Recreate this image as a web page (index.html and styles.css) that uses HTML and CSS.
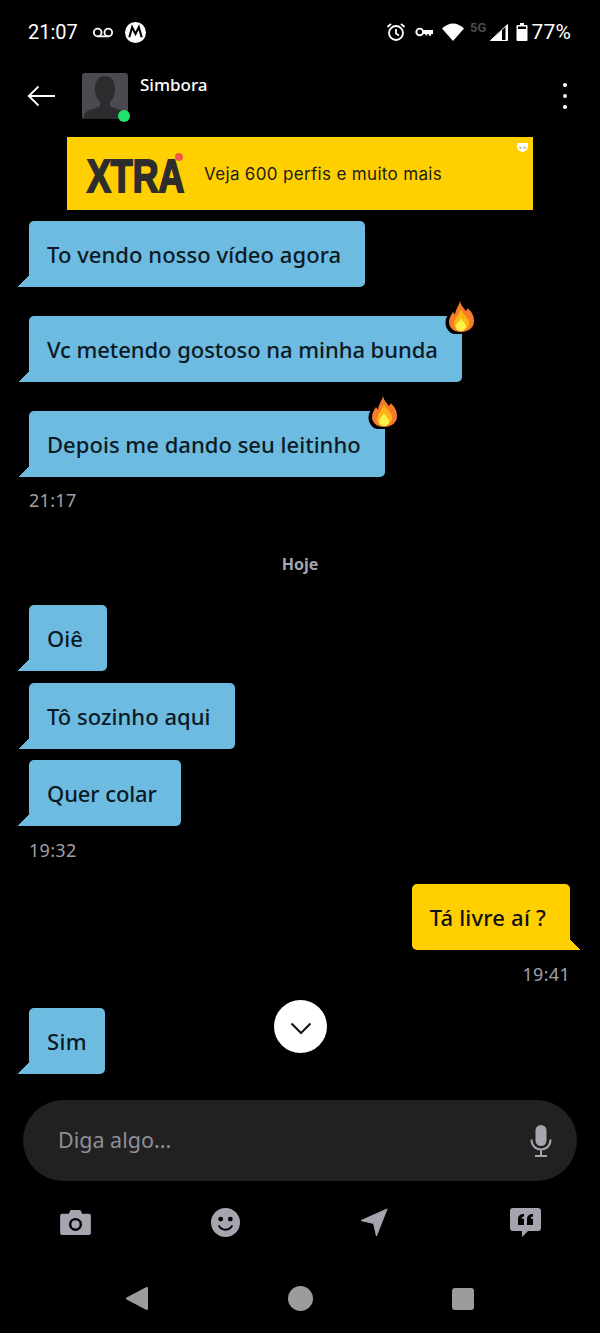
FILE: index.html
```html
<!DOCTYPE html>
<html lang="pt">
<head>
<meta charset="utf-8">
<title>Simbora</title>
<link rel="stylesheet" href="styles.css">
</head>
<body>
<svg class="defs" width="0" height="0" aria-hidden="true">
  <symbol id="flame" viewBox="0 0 31 33">
    <path d="M17 1C18 6 21 8 23 11 24 10 24.500 9 24.500 8 28 11 30 15 30 20 30 27 25 32 18 32 11 32 7 27 7 21 7 17 9 14 10 12 11 13 11.500 14 12 15 12 10 16 6 17 1Z" transform="translate(-3.500 .5)" fill="#000" stroke="#000" stroke-width="2"/>
    <path d="M17 0C18 5 21 7 23 10 24 9 24.500 8 24.500 7 28 10 31 14 31 20 31 27 25 31 18 31 11 31 6 27 6 21 6 17 8 14 10 11 11 12 11.500 13 12 14 12 9 16 5 17 0Z" fill="#f47c2a"/>
    <path d="M18 8C19 12 22 14 25 18 27 21 26 25 24 27 22 29 20 30 18 30 15 30 12 28 11 25 10 20 15 15 18 8Z" fill="#fdb515"/>
    <path d="M18 17C19 20 23 22 23 26 23 28 21 30 18 30 15 30 13 28 13 26 13 22 17 20 18 17Z" fill="#fff04a"/>
  </symbol>
</svg>
<main class="screen">
  <div class="status">
    <div class="status-left">
      <span class="clock">21:07</span>
      <svg class="ic-vm" viewBox="0 0 24 12"><circle cx="6.200" cy="6" r="4.200"/><circle cx="17.800" cy="6" r="4.200"/><path d="M6 10.200h12"/></svg>
      <svg class="ic-moto" viewBox="0 0 22 22"><circle cx="11" cy="11" r="11" fill="#fff"/><path d="M4.500 16 7.500 5.500 11 12.500 14.500 5.500 17.500 16" fill="none" stroke="#000" stroke-width="2.200"/></svg>
    </div>
    <div class="status-right">
      <svg class="ic-alarm" viewBox="0 0 20 20"><circle cx="10" cy="11" r="7" fill="none" stroke="#fff" stroke-width="1.800"/><path d="M10 7v4.500l3 2M1.500 5 5 1.800M18.500 5 15 1.800" fill="none" stroke="#fff" stroke-width="1.800"/></svg>
      <svg class="ic-key" viewBox="0 0 20 12"><circle cx="5" cy="6" r="3.600" fill="none" stroke="#fff" stroke-width="2"/><path d="M8.500 4h10.500v4h-2v2h-2.500v-2h-1.500v1.500h-2v-1.500h-2.500z" fill="#fff"/></svg>
      <svg class="ic-wifi" viewBox="0 0 22 18"><path d="M0 5.500C3 2.500 7 .5 11 .5s8 2 11 5L11 18z" fill="#fff"/></svg>
      <span class="fiveg">5G</span>
      <svg class="ic-signal" viewBox="0 0 18 17"><path d="M17.500 .5v16H.5z" fill="none" stroke="#fff" stroke-width="1"/><path d="M12 6v11H0z" fill="#fff"/><path d="M15.500 3v13.500h2V1z" fill="#fff"/></svg>
      <svg class="ic-batt" viewBox="0 0 12 18"><path d="M4 0h4v2h2.500a1 1 0 0 1 1 1v14a1 1 0 0 1-1 1h-9a1 1 0 0 1-1-1V3a1 1 0 0 1 1-1H4z" fill="#fff"/><rect x="2" y="3.500" width="8" height="2.500" fill="#000"/></svg>
      <span class="batt-text">77%</span>
    </div>
  </div>

  <header class="topbar">
    <svg class="ic-back" viewBox="0 0 28 22"><path d="M28 11H2M11.500 1.500 1.800 11l9.700 9.500" fill="none" stroke="#fff" stroke-width="1.800"/></svg>
    <div class="avatar">
      <svg viewBox="0 0 46 46" width="46" height="46"><rect width="46" height="46" rx="3" fill="#4a4a50"/><path d="M23 3c7 0 10 6 10 13 0 6-2 10-5 13v4c4 3 12 3 15 7 1 2 1 4 1 6H2c0-2 0-4 1-6 3-4 11-4 15-7v-4c-3-3-5-7-5-13 0-7 3-13 10-13z" fill="#2c2c2e"/></svg>
      <span class="online"></span>
    </div>
    <div class="name">Simbora</div>
    <div class="more"><i></i><i></i><i></i></div>
  </header>

  <aside class="banner">
    <div class="logo"><span class="logo-text">XTRA</span><b class="logo-dot"></b></div>
    <span class="ad-text">Veja 600 perfis e muito mais</span>
    <svg class="ad-mask" viewBox="0 0 12 10"><path d="M1 0h10a1 1 0 0 1 1 1v3c0 3-3 6-6 6S0 7 0 4V1a1 1 0 0 1 1-1z" fill="#fff"/><path d="M2 4l3 1v1H3zM10 4 7 5v1h2z" fill="#a89a50"/></svg>
  </aside>

  <section class="chat">
    <div class="msg in m-first">To vendo nosso vídeo agora</div>
    <div class="msg in m-big">Vc metendo gostoso na minha bunda<svg class="flame"><use href="#flame"/></svg></div>
    <div class="msg in m-mid">Depois me dando seu leitinho<svg class="flame"><use href="#flame"/></svg></div>
    <div class="time t1">21:17</div>
    <div class="day">Hoje</div>
    <div class="msg in">Oiê</div>
    <div class="msg in m-tight m-alone">Tô sozinho aqui</div>
    <div class="msg in m-tight m-colar">Quer colar</div>
    <div class="time t2">19:32</div>
    <div class="msg out">Tá livre aí ?</div>
    <div class="time right t3">19:41</div>
    <div class="msg in m-sim">Sim</div>
    <button class="down" aria-label="Descer"><svg viewBox="0 0 22 13" width="22" height="13"><path d="M1.500 1.500 11 11l9.500-9.500" fill="none" stroke="#111" stroke-width="2"/></svg></button>
  </section>

  <div class="composer">
    <span class="placeholder">Diga algo...</span>
    <svg class="ic-mic" viewBox="0 0 22 32"><rect x="5.500" y="0" width="11" height="21" rx="5.500" fill="#a5a5b0"/><path d="M1.500 14.500c0 6 4 10 9.500 10s9.500-4 9.500-10M11 24.500V31M5 31h12" fill="none" stroke="#a5a5b0" stroke-width="2"/></svg>
  </div>

  <div class="tools">
    <svg class="tool t-cam" viewBox="0 0 32 26"><path d="M2 4h7l2-4h10l2 4h7a2 2 0 0 1 2 2v18a2 2 0 0 1-2 2H2a2 2 0 0 1-2-2V6a2 2 0 0 1 2-2z" fill="#a5a5b0"/><circle cx="16" cy="15" r="5.500" fill="none" stroke="#000" stroke-width="2.500"/></svg>
    <svg class="tool" viewBox="0 0 30 30"><circle cx="15" cy="15" r="15" fill="#a5a5b0"/><circle cx="10" cy="11.500" r="2.500"/><circle cx="20" cy="11.500" r="2.500"/><path d="M8 18c1.500 3 4 4.500 7 4.500s5.500-1.500 7-4.500" fill="none" stroke="#000" stroke-width="2"/></svg>
    <svg class="tool" viewBox="1 0 30 30"><path d="M28 1 17 29l-3-13L1 13z" fill="#a5a5b0" stroke="#a5a5b0" stroke-linejoin="round"/></svg>
    <svg class="tool" viewBox="0 0 31 29"><path d="M3 0h25a3 3 0 0 1 3 3v17a3 3 0 0 1-3 3H18l-6 6v-6H3a3 3 0 0 1-3-3V3a3 3 0 0 1 3-3z" fill="#a5a5b0"/><path d="M8 17v-6c0-3 2-5 6-5v2.500c-1.500 0-2.300.8-2.300 2.200H14V17zM17 17v-6c0-3 2-5 6-5v2.500c-1.500 0-2.300.8-2.300 2.200H23V17z" fill="#000"/></svg>
  </div>

  <nav class="sysnav">
    <svg class="nav-back" viewBox="0 0 24 25"><path d="M22 2v21L2 12.500z" fill="#9c9c9c" stroke="#9c9c9c" stroke-width="2" stroke-linejoin="round"/></svg>
    <span class="nav-home"></span>
    <span class="nav-recent"></span>
  </nav>
</main>
</body>
</html>
```
FILE: styles.css
```css
* { box-sizing: border-box; }
html, body { margin: 0; padding: 0; background: #000; }
.defs { position: absolute; }
.screen {
  width: 600px; height: 1333px; display: flex; flex-direction: column;
  background: #000; color: #fff; overflow: hidden;
  font-family: "Noto Sans", "Liberation Sans", sans-serif;
}
.status {
  height: 64px; flex: none; display: flex; justify-content: space-between; align-items: center;
  padding: 0 29px 0 28px; font-family: Roboto, sans-serif; font-size: 21px;
}
.status-left, .status-right { display: flex; align-items: center; }
.clock { font-size: 20px; }
.ic-vm { width: 22px; height: 11px; margin-left: 14px; fill: none; stroke: #fff; stroke-width: 2; }
.ic-moto { width: 21px; height: 21px; margin-left: 11px; }
.ic-alarm { width: 20px; height: 20px; }
.ic-key { width: 19px; height: 12px; margin-left: 9px; }
.ic-wifi { width: 22px; height: 18px; margin-left: 8px; }
.fiveg { font-size: 13px; font-weight: 700; color: #4a4a4a; margin: -10px 0 0 6px; }
.ic-signal { width: 18px; height: 17px; margin-left: 4px; }
.ic-batt { width: 12px; height: 18px; margin-left: 8px; }
.batt-text { margin-left: 3px; letter-spacing: .2px; }

.topbar { height: 73px; flex: none; display: flex; align-items: flex-start; padding-left: 27px; position: relative; }
.ic-back { width: 28px; height: 22px; margin-top: 21px; flex: none; }
.avatar { width: 46px; height: 46px; margin: 9px 0 0 27px; position: relative; flex: none; }
.avatar svg { display: block; }
.online { position: absolute; right: -2px; bottom: -3px; width: 12px; height: 12px; border-radius: 50%; background: #1fe26f; }
.name { margin: 9px 0 0 12px; font-size: 17px; font-weight: 500; line-height: 24px; }
.more { margin: 19px 33px 0 auto; display: flex; flex-direction: column; gap: 7px; }
.more i { display: block; width: 4px; height: 4px; border-radius: 50%; background: #fff; }

.banner {
  width: 466px; height: 73px; flex: none; margin-left: 67px; background: #ffcf00;
  display: flex; align-items: center; position: relative; color: #1c1c1c;
}
.logo { margin: 4px 0 0 20px; width: 97px; height: 47px; position: relative; flex: none; }
.logo-text {
  display: block; color: #2d2d2d; font-family: "Liberation Sans", sans-serif;
  font-weight: 700; font-size: 47px; line-height: 47px; -webkit-text-stroke: 2px #2d2d2d;
  white-space: nowrap; transform: scaleX(.76); transform-origin: left center;
}
.logo-dot { position: absolute; right: 1px; top: 1px; width: 8px; height: 8px; border-radius: 50%; background: #f0584a; }
.ad-text { margin-left: 20px; font-size: 17px; letter-spacing: .33px; font-family: Inter, sans-serif; }
.ad-mask { position: absolute; right: 5px; top: 6px; width: 11px; height: 9px; }

.chat { flex: 1; min-height: 0; position: relative; padding: 11px 30px 0 29px; display: flex; flex-direction: column; align-items: flex-start; }
.msg {
  height: 66px; padding: 0 24px 0 18px; display: flex; align-items: center; position: relative;
  font-size: 22px; font-weight: 500; color: #0c1a24; background: #6dbbe0; border-radius: 5px; margin-top: 12px; white-space: nowrap;
  font-family: "Noto Sans", sans-serif;
}
.msg.in { border-bottom-left-radius: 0; }
.msg.in::after { content: ""; position: absolute; left: -11px; bottom: 0; width: 11px; height: 11px; background: linear-gradient(to bottom right, transparent 50%, #6dbbe0 50%); }
.msg.out { align-self: flex-end; background: #ffcf00; color: #111; border-bottom-right-radius: 0; margin-top: 22px; letter-spacing: .2px; }
.msg.out::after { content: ""; position: absolute; right: -11px; bottom: 0; width: 11px; height: 11px; background: linear-gradient(to bottom left, transparent 50%, #ffcf00 50%); }
.m-first { margin-top: 0; letter-spacing: .06px; }
.m-big { margin-top: 29px; letter-spacing: -.05px; }
.m-mid { margin-top: 29px; letter-spacing: .03px; }
.m-tight { margin-top: 11.500px; }
.m-alone { letter-spacing: .03px; }
.m-colar { letter-spacing: -.1px; }
.m-sim { margin-top: 22px; padding-right: 18px; letter-spacing: .4px; }
.flame { position: absolute; right: -12px; top: -15px; width: 31px; height: 33px; }
.time { font-size: 18px; letter-spacing: .3px; color: #a0a0a8; line-height: 24px; margin-top: 11px; }
.t2 { margin-top: 12px; }
.time.right { align-self: flex-end; margin-top: 12px; }
.day { align-self: center; margin: 40px 0 17px 1px; font-size: 16px; font-weight: 700; color: #a5a5b0; line-height: 24px; }
.down { position: absolute; left: 274px; top: 790px; width: 53px; height: 53px; border: 0; padding: 4px 0 0; border-radius: 50%; background: #fff; display: flex; align-items: center; justify-content: center; }

.composer {
  height: 81px; flex: none; margin: 0 23px; background: #212121; border-radius: 41px;
  display: flex; align-items: center; justify-content: space-between; padding: 0 25px 2px 35px;
}
.placeholder { font-size: 21.500px; color: #8f8f98; }
.ic-mic { width: 22px; height: 32px; margin-top: 2px; }
.tools { height: 83px; flex: none; display: flex; align-items: center; justify-content: space-between; padding: 0 59px 1px 60px; }
.tool { width: 31px; height: 29px; }
.t-cam { height: 25px; }
.sysnav { height: 69px; flex: none; display: flex; align-items: center; padding: 0 126px 0 125px; justify-content: space-between; }
.nav-back { width: 24px; height: 25px; }
.nav-home { width: 25px; height: 25px; border-radius: 50%; background: #9c9c9c; }
.nav-recent { width: 22px; height: 22px; border-radius: 3px; background: #9c9c9c; }
```
